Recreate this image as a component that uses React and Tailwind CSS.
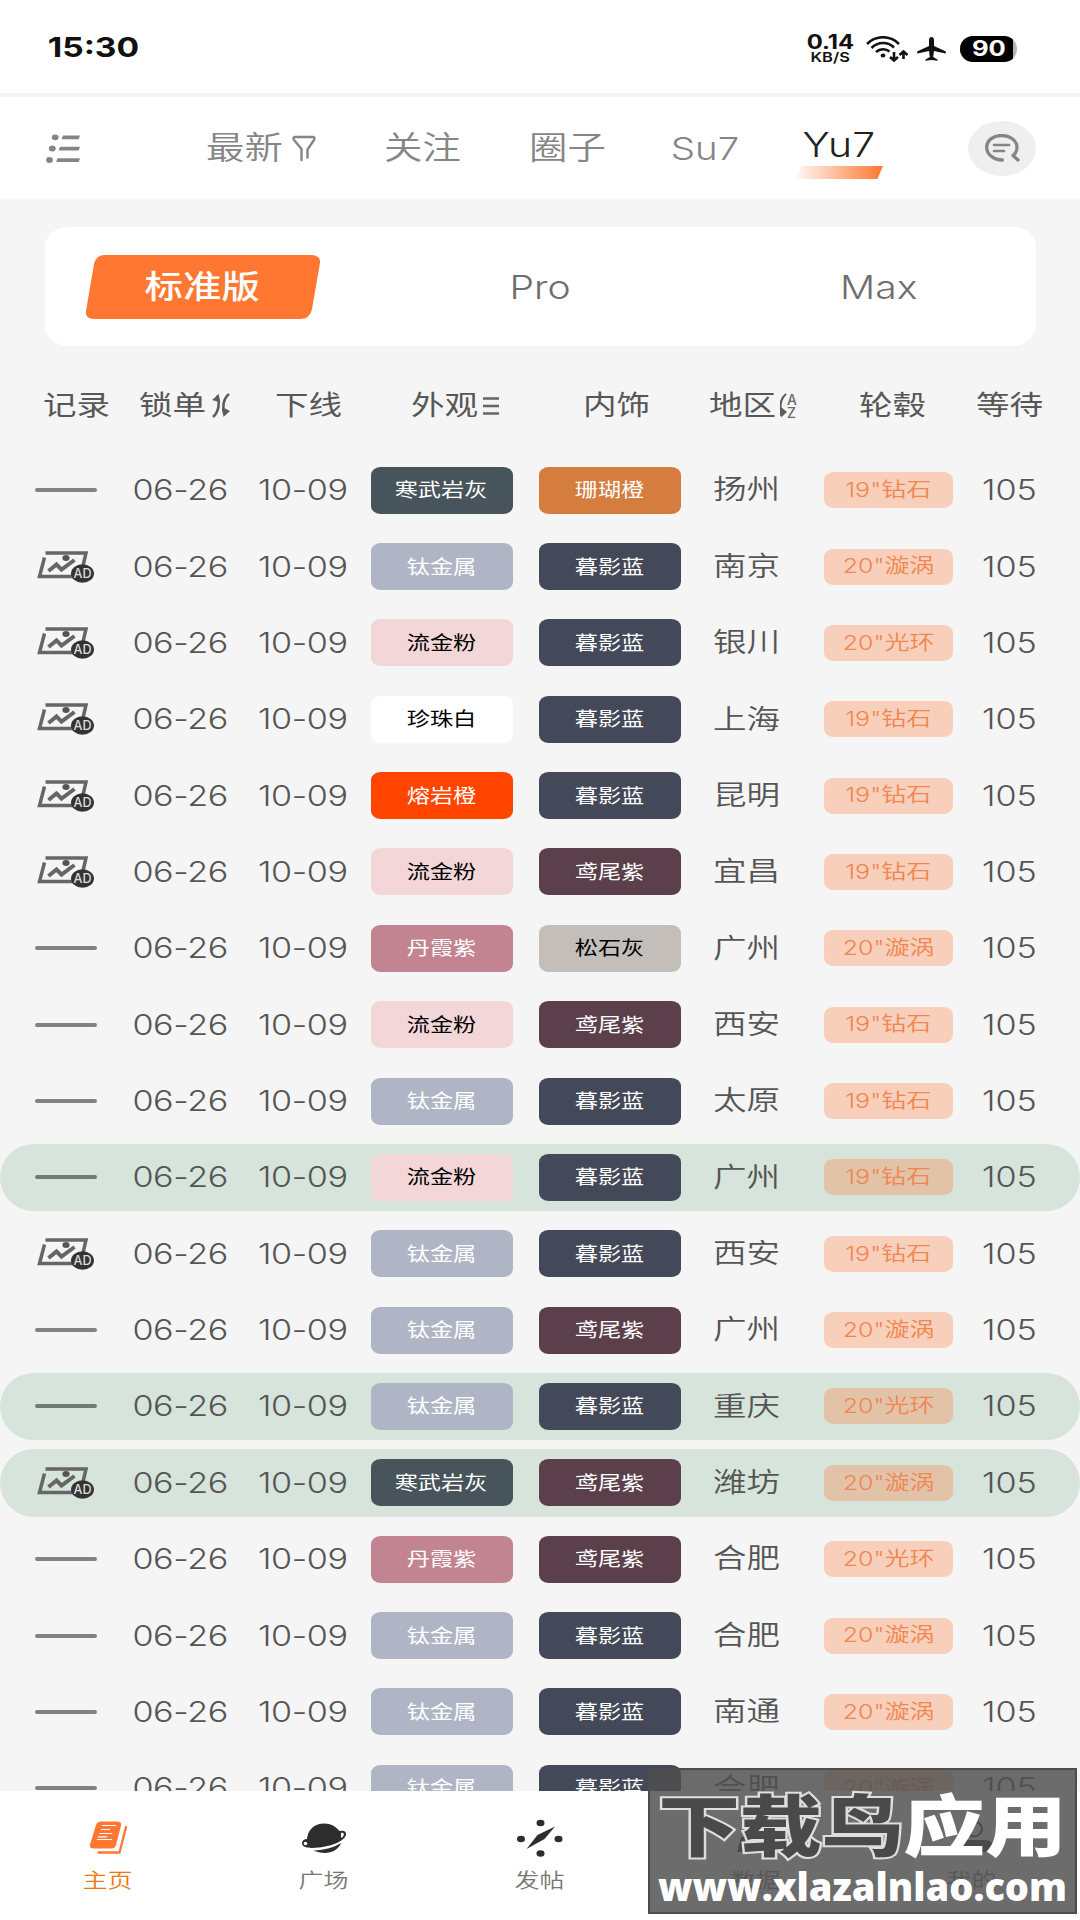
const FONT = "font-['Inter','Noto_Sans_CJK_SC',sans-serif]";

// Horizontally widened label, giving the broad letterforms of the app.
function T({ className = '', children }) {
  return (
    <span className={`inline-block shrink-0 scale-x-[1.22] whitespace-nowrap leading-none ${className}`}>
      {children}
    </span>
  );
}

const COLORS = {
  寒武岩灰: 'bg-[#47545c] text-white',
  珊瑚橙: 'bg-[#d47d3e] text-white',
  钛金属: 'bg-[#b0b5c5] text-white',
  暮影蓝: 'bg-[#444959] text-white',
  流金粉: 'bg-[#f3d7d8] text-black',
  珍珠白: 'bg-white text-black',
  熔岩橙: 'bg-[#ff4500] text-white',
  鸢尾紫: 'bg-[#5b3f4b] text-white',
  丹霞紫: 'bg-[#c28491] text-white',
  松石灰: 'bg-[#c3beb9] text-black',
};

// [has picture, exterior, interior, city, wheel, highlighted]
const ROWS = [
  [0, '寒武岩灰', '珊瑚橙', '扬州', '19"钻石', 0],
  [1, '钛金属', '暮影蓝', '南京', '20"漩涡', 0],
  [1, '流金粉', '暮影蓝', '银川', '20"光环', 0],
  [1, '珍珠白', '暮影蓝', '上海', '19"钻石', 0],
  [1, '熔岩橙', '暮影蓝', '昆明', '19"钻石', 0],
  [1, '流金粉', '鸢尾紫', '宜昌', '19"钻石', 0],
  [0, '丹霞紫', '松石灰', '广州', '20"漩涡', 0],
  [0, '流金粉', '鸢尾紫', '西安', '19"钻石', 0],
  [0, '钛金属', '暮影蓝', '太原', '19"钻石', 0],
  [0, '流金粉', '暮影蓝', '广州', '19"钻石', 1],
  [1, '钛金属', '暮影蓝', '西安', '19"钻石', 0],
  [0, '钛金属', '鸢尾紫', '广州', '20"漩涡', 0],
  [0, '钛金属', '暮影蓝', '重庆', '20"光环', 1],
  [1, '寒武岩灰', '鸢尾紫', '潍坊', '20"漩涡', 1],
  [0, '丹霞紫', '鸢尾紫', '合肥', '20"光环', 0],
  [0, '钛金属', '暮影蓝', '合肥', '20"漩涡', 0],
  [0, '钛金属', '暮影蓝', '南通', '20"漩涡', 0],
  [0, '钛金属', '暮影蓝', '合肥', '20"漩涡', 0],
];

function StatusBar() {
  return (
    <div className="flex h-[97px] w-full shrink-0 items-center border-b-4 border-[#f4f4f4] bg-white text-[#111]">
      <div className="ml-[44px] flex w-[98px] justify-center pt-[3px]">
        <T className="text-[27.500px] font-bold">15:30</T>
      </div>
      <div className="ml-[658px] flex w-[60px] flex-col items-center pt-[6px]">
        <T className="text-[19.500px] font-bold !leading-[15px]">0.14</T>
        <T className="text-[13.500px] font-semibold !leading-[14px]">KB/S</T>
      </div>
      <svg className="ml-[6px] mt-1 h-[26px] w-[42px]" viewBox="0 0 42 26" fill="none" stroke="#111">
        <path d="M1 8C10 -1 24 -1 33 8" strokeWidth="2.600" />
        <path d="M5.500 12C12 5.500 22 5.500 28 11.500" strokeWidth="2.600" />
        <path d="M10 16C14 12.500 20 12.500 23.500 15.500" strokeWidth="2.600" />
        <ellipse cx="17" cy="19.500" rx="2.400" ry="1.900" fill="#111" stroke="none" />
        <path d="M28 16v8.500M24 21l4 3.500 4-3.500M37.500 23v-7.500M33.500 19l4-3.500 4 3.500" strokeWidth="2.600" />
      </svg>
      <svg className="ml-[9px] mt-1 h-[24px] w-[29px]" viewBox="0 0 29 24" fill="#111">
        <path d="M14.500 0C16 0 17 1.300 17 3v6l11.500 5.200c.5.300.5 2.300 0 2.300L17 14l-.8 6 4.300 2.500v1.300l-6-.9-6 .9v-1.300l4.300-2.500L12 14 .5 16.500c-.5 0-.5-2 0-2.300L12 9V3c0-1.700 1-3 2.500-3z" />
      </svg>
      <div className="ml-[14px] mt-1 flex h-[26px] w-[57px] overflow-hidden rounded-full bg-[#b5b5b5]">
        <div className="flex h-full w-[53px] items-center justify-center bg-black pl-1 text-white">
          <T className="text-[21px] font-bold">90</T>
        </div>
      </div>
    </div>
  );
}

function TopNav() {
  return (
    <div className="flex h-[102px] w-full shrink-0 items-center bg-white text-[#858585]">
      <svg className="ml-[46px] h-[29px] w-[34px]" viewBox="0 0 34 29" fill="#858585">
        <ellipse cx="9.200" cy="3.300" rx="3.400" ry="2.900" />
        <ellipse cx="6.300" cy="14.500" rx="3.400" ry="2.900" />
        <ellipse cx="3.500" cy="26" rx="3.400" ry="2.900" />
        <path d="M17 1.500h17l-1.300 3.700H15.500zM14 12.700h20l-1.300 3.700H12.700zM11.500 24.200H34l-1.300 3.700H10.200z" />
      </svg>
      <div className="ml-[120px] flex w-[90px] justify-center">
        <T className="text-[31.500px] font-[350]">最新</T>
      </div>
      <svg className="ml-[2px] h-[27px] w-[24px]" viewBox="0 0 24 27" fill="none" stroke="#858585" strokeWidth="2.400" strokeLinecap="round" strokeLinejoin="round">
        <path d="M9.500 25V14L2 5C1 3 1.500 2 3.500 2h17c2 0 2.500 1 1.500 3l-6.500 9.500V22.500" />
      </svg>
      <div className="ml-[62px] flex w-[90px] justify-center">
        <T className="text-[31.500px] font-[350]">关注</T>
      </div>
      <div className="ml-[55px] flex w-[90px] justify-center">
        <T className="text-[31.500px] font-[350]">圈子</T>
      </div>
      <div className="ml-[47px] flex w-[90px] justify-center pt-[2px]">
        <T className="text-[31.500px] font-[350]">Su7</T>
      </div>
      <div className="relative ml-[44px] flex w-[90px] justify-center">
        <T className="mb-[5px] text-[33.500px] font-[350] text-[#222]">Yu7</T>
        <svg className="absolute top-[37px] h-[13px] w-[87px]" viewBox="0 0 87 13">
          <defs>
            <linearGradient id="underline" x1="0" x2="1">
              <stop offset="0" stopColor="#ff7730" stopOpacity="0.05" />
              <stop offset="1" stopColor="#ff7730" />
            </linearGradient>
          </defs>
          <path d="M5 0h82l-5.500 13H0z" fill="url(#underline)" />
        </svg>
      </div>
      <div className="ml-[84px] flex h-[55px] w-[68px] items-center justify-center rounded-[50%] bg-[#efefef]">
        <svg className="h-[28px] w-[35px]" viewBox="0 0 35 28" fill="none" stroke="#858585" strokeWidth="3.300" strokeLinecap="round">
          <path d="M17.500 26C9 26 1.700 20.500 1.700 13.500S8 1.500 16.800 1.500 32 7 32 13.500c0 3.300-1.500 6-4 8l5 4.500" strokeLinejoin="round" />
          <path d="M9 11h15M9 17h10" strokeWidth="2.700" />
        </svg>
      </div>
    </div>
  );
}

function Versions() {
  return (
    <div className="mr-[44px] ml-[45px] mt-[28px] flex h-[119px] shrink-0 items-center justify-center rounded-[24px/20px] bg-white text-[#6e6e6e]">
      <div className="flex w-[338px] shrink-0 justify-center">
        <div className="relative flex h-[64px] w-[234px] items-center justify-center">
          <svg className="absolute inset-0 h-full w-full" viewBox="0 0 234 64">
            <path d="M19 0H224q11 0 10 8L226 54q-2 10-12 10H9q-10 0-9-8L8 9Q10 0 19 0z" fill="#ff7730" />
          </svg>
          <T className="relative text-[31.500px] font-medium text-white">标准版</T>
        </div>
      </div>
      <div className="flex w-[338px] shrink-0 justify-center pt-[2px]">
        <T className="text-[32px] font-[350]">Pro</T>
      </div>
      <div className="flex w-[338px] shrink-0 justify-center pt-[2px]">
        <T className="text-[32px] font-[350]">Max</T>
      </div>
    </div>
  );
}

function HeadCell({ className, children }) {
  return (
    <div className={`flex w-[66px] shrink-0 justify-center ${className}`}>
      <T className="text-[27.500px]">{children}</T>
    </div>
  );
}

function TableHead() {
  return (
    <div className="flex h-[106px] shrink-0 items-center pt-[13px] text-[#575757]">
      <HeadCell className="ml-[43px]">记录</HeadCell>
      <HeadCell className="ml-[30px]">锁单</HeadCell>
      <svg className="ml-[7px] h-[25px] w-[18px]" viewBox="0 0 18 25" fill="#5c5c5c">
        <path d="M0 7 7 1V9z" />
        <path d="M5.500 2C8 9 7 19 1 24M17 1C11 6 10 15 12.500 22" fill="none" stroke="#5c5c5c" strokeWidth="2.600" />
        <path d="M11 14.500l7 3.500-6.500 6z" />
      </svg>
      <HeadCell className="ml-[45px]">下线</HeadCell>
      <HeadCell className="ml-[70px]">外观</HeadCell>
      <svg className="ml-[6px] h-[18px] w-[16px]" viewBox="0 0 16 18" stroke="#666" strokeWidth="2.600">
        <path d="M0 1.500h16M0 9h16M0 16.500h16" />
      </svg>
      <HeadCell className="ml-[84px]">内饰</HeadCell>
      <HeadCell className="ml-[60px]">地区</HeadCell>
      <div className="ml-[5px] flex h-[25px] w-[18px] text-[#6a6a6a]">
        <svg className="h-[25px] w-[7px] shrink-0" viewBox="0 0 7 25" fill="#5c5c5c">
          <path d="M6 1C0 6-.5 15 1.500 23" fill="none" stroke="#5c5c5c" strokeWidth="2.200" />
          <path d="M1 14l6 5-6 5.500z" />
        </svg>
        <div className="flex flex-col text-[14px] leading-[13px] font-medium">
          <span>A</span>
          <span>Z</span>
        </div>
      </div>
      <HeadCell className="ml-[61px]">轮毂</HeadCell>
      <HeadCell className="ml-[51px]">等待</HeadCell>
    </div>
  );
}

function PictureIcon() {
  return (
    <svg className="ml-[3px] h-[32px] w-[58px] shrink-0" viewBox="0 0 58 32">
      <g fill="none" stroke="#666" strokeWidth="3.500">
        <path d="M8.500 1.900H49L46 15M7.500 6.500 2.500 25.500H38" />
        <path d="M11.500 20 19.500 13.500l5 5L37.500 9" strokeWidth="4" />
      </g>
      <ellipse cx="29" cy="7" rx="3.600" ry="3" fill="#555" />
      <ellipse cx="45.500" cy="22.500" rx="11.500" ry="9.300" fill="#333" />
      <text x="45.500" y="27" textAnchor="middle" textLength="18" lengthAdjust="spacingAndGlyphs" fontSize="12.500" fontWeight="500" fontFamily="Inter" fill="#ddd">AD</text>
    </svg>
  );
}

function ColorPill({ name, className }) {
  return (
    <div className={`flex h-[47px] w-[142px] shrink-0 items-center justify-center rounded-[10px/8px] pt-px ${COLORS[name]} ${className}`}>
      <T className="text-[19px]">{name}</T>
    </div>
  );
}

function Row({ row }) {
  const [pic, exterior, interior, city, wheel, marked] = row;
  return (
    <div className="flex h-[76.370px] shrink-0 items-center text-[#555]">
      <div className={`flex h-[67.600px] w-full items-center rounded-[34px] ${marked ? 'bg-[#d6e4db]' : ''}`}>
        <div className="ml-[34px] flex w-[64px] shrink-0 items-center">
          {pic ? <PictureIcon /> : <div className="ml-[1px] h-[4px] w-[62px] rounded-full bg-black/47" />}
        </div>
        <div className="ml-[36px] flex w-[92px] shrink-0 justify-center">
          <T className="text-[28px] font-[350] tracking-[-0.3px]">06-26</T>
        </div>
        <div className="ml-[31px] flex w-[92px] shrink-0 justify-center">
          <T className="text-[28px] font-[350] tracking-[-0.3px]">10-09</T>
        </div>
        <ColorPill name={exterior} className="ml-[21.500px]" />
        <ColorPill name={interior} className="ml-[26px]" />
        <div className="ml-[33.500px] flex w-[64px] shrink-0 justify-center">
          <T className="text-[27.500px] font-[350]">{city}</T>
        </div>
        <div className="ml-[46px] flex h-[36px] w-[129px] shrink-0 items-center justify-center rounded-[10px/8px] bg-[#ff7730]/30 text-[#ef8650]">
          <T className="text-[20.500px] font-[350]">{wheel}</T>
        </div>
        <div className="ml-[30px] flex w-[52px] shrink-0 justify-center">
          <T className="text-[28px] font-[350]">105</T>
        </div>
      </div>
    </div>
  );
}

function BookIcon() {
  return (
    <svg className="h-[38px] w-[46px]" viewBox="0 0 46 38">
      <path d="M16 2.500H32q5 0 4 4L31 26q-1 3.500-5 3.500H9q-5 0-4-4L11 6q1-3.500 5-3.500z" fill="#ff7730" />
      <path d="M41 8 34.500 33.500H13.500" fill="none" stroke="#ff7730" strokeWidth="2.300" strokeLinecap="round" />
      <path d="M17 6.500h14M16 10.500h9M14.500 14.500h13M13 17.800h9M12 20.500h15" stroke="#fff" strokeWidth="1.200" />
    </svg>
  );
}

function PlanetIcon() {
  return (
    <svg className="h-[38px] w-[46px]" viewBox="0 0 46 38" fill="#2d2d2d">
      <path d="M6 20C7 10 14 4.500 23 4.500c7 0 12 3 15.500 7.500 4-1 7 0 6.500 3.500C44 22 31 27 18 28.500 8 29.500 1 29 1 24c0-2 2-4 5-4z" />
      <ellipse cx="4.500" cy="24.500" rx="1.800" ry="1.800" fill="#fff" />
      <path d="M40 14c2.500-.5 3.500.5 2.500 2.800-.4 1-1.500 1.700-2.500 2.300z" fill="#fff" />
      <path d="M12.500 31.500C24 31 33 28.500 40 24 38 30 31 34 24 34c-4 0-8-1-11.500-2.500z" />
    </svg>
  );
}

function CompassIcon() {
  return (
    <svg className="h-[38px] w-[46px]" viewBox="0 0 46 38" fill="#2d2d2d">
      <ellipse cx="23.500" cy="4" rx="4" ry="3.200" />
      <ellipse cx="23.500" cy="34.500" rx="4" ry="3.200" />
      <ellipse cx="4" cy="20" rx="4" ry="3.200" />
      <ellipse cx="41.500" cy="20" rx="4" ry="3.200" />
      <path d="M38 7.500 27.500 20 9.500 30 20.500 16z" />
    </svg>
  );
}

function DataIcon() {
  return (
    <svg className="h-[38px] w-[46px]" viewBox="0 0 46 38" fill="#2d2d2d">
      <path d="M8 18h7L11 33H4zM20 8h7L20 33h-7zM33 4h7L32 33h-7z" />
    </svg>
  );
}

function UserIcon() {
  return (
    <svg className="h-[38px] w-[46px]" viewBox="0 0 46 38" fill="#2d2d2d">
      <ellipse cx="25" cy="10" rx="8" ry="7.500" fill="none" stroke="#2d2d2d" strokeWidth="2" />
      <path d="M6 30c1-7 8-9 16-9h14c6 0 9 4 7 8-1 3-4 4-8 4H8c-2 0-2-1-2-3z" />
    </svg>
  );
}

const TABS = [
  ['主页', BookIcon, 'text-[#ea7a14]'],
  ['广场', PlanetIcon, 'text-[#777]'],
  ['发帖', CompassIcon, 'text-[#777]'],
  ['数据', DataIcon, 'text-[#777]'],
  ['我的', UserIcon, 'text-[#777]'],
];

function BottomNav() {
  return (
    <div className="grid h-[129px] w-full shrink-0 grid-cols-5 bg-white">
      {TABS.map(([label, Icon, color]) => (
        <div key={label} className={`flex flex-col items-center pt-[28px] pr-px ${color}`}>
          <Icon />
          <T className="mt-[14px] text-[20.500px] font-[350]">{label}</T>
        </div>
      ))}
    </div>
  );
}

function Watermark() {
  return (
    <div className="absolute right-[3px] bottom-[6px] flex h-[146px] w-[429px] flex-col items-center overflow-hidden border-2 border-[#4c4c4c] bg-[#505050]/84">
      <div className="mt-[23px] flex w-full justify-center">
        <T className="text-[67px] font-black">
          <span className="text-[#4a4a4a] [-webkit-text-stroke:4px_#dedede] [paint-order:stroke_fill]">下载鸟</span>
          <span className="text-white">应用</span>
        </T>
      </div>
      <div className="mt-[7px] font-['Open_Sans',sans-serif] text-[38px] leading-none font-extrabold whitespace-nowrap text-white">
        www.xlazalnlao.com
      </div>
    </div>
  );
}

export default function App() {
  return (
    <div className={`relative flex h-[1920px] w-[1080px] flex-col overflow-hidden bg-[#f5f5f5] ${FONT}`}>
      <StatusBar />
      <TopNav />
      <Versions />
      <TableHead />
      <div className="flex min-h-0 flex-1 flex-col overflow-hidden">
        {ROWS.map((row, i) => (
          <Row key={i} row={row} />
        ))}
      </div>
      <BottomNav />
      <Watermark />
    </div>
  );
}
